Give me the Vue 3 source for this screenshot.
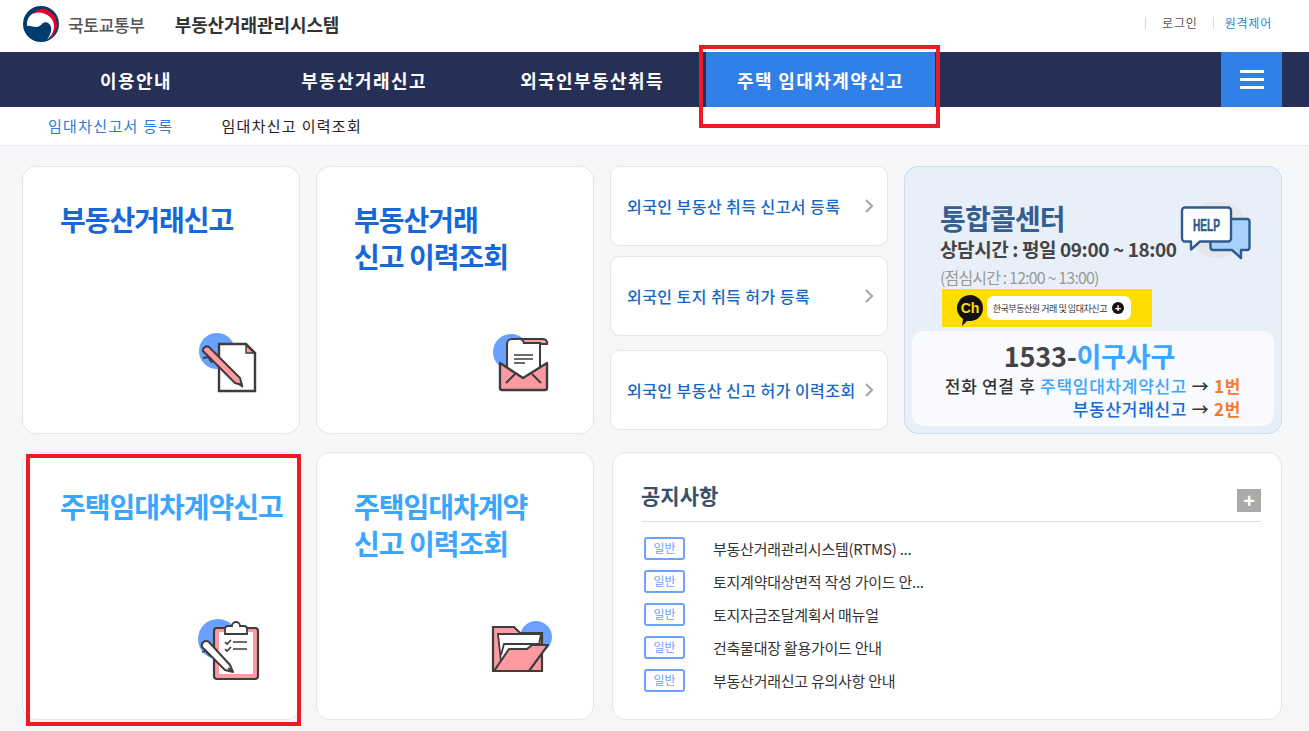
<script setup>
const topLinks = [
  { text: '로그인', cls: 'tl-dark' },
  { text: '원격제어', cls: 'tl-blue' },
]
const navItems = ['이용안내', '부동산거래신고', '외국인부동산취득', '주택 임대차계약신고']
const sideLinks = ['외국인 부동산 취득 신고서 등록', '외국인 토지 취득 허가 등록', '외국인 부동산 신고 허가 이력조회']
const notices = [
  '부동산거래관리시스템(RTMS) ...',
  '토지계약대상면적 작성 가이드 안...',
  '토지자금조달계획서 매뉴얼',
  '건축물대장 활용가이드 안내',
  '부동산거래신고 유의사항 안내',
]
</script>

<template>
  <div class="page">
    <header class="top">
      <div class="brand">
        <svg class="logo" width="40" height="38" viewBox="21 5 40 38">
          <circle cx="41" cy="24" r="18" fill="#003c6c" />
          <path d="M27 26C26 17 33 11 41 11C50 11 56 18 55 26C54 33 50 37 47 40C50 35 52 31 51 27C50 23 46 21 43 23C41 25 39 27 36 27C32 27 30 25 27 26z" fill="#fff" />
          <path d="M31 15C35 10 41 8 45 9C52 11 57 17 57 25C57 31 53 36 49 40C52 35 54 31 54 26C54 19 48 14 42 13C37 12 34 13 31 15z" fill="#e4002b" />
        </svg>
        <span class="ministry">국토교통부</span>
        <span class="system">부동산거래관리시스템</span>
      </div>
      <div class="top-links">
        <a v-for="l in topLinks" :key="l.text" :class="['top-link', l.cls]">{{ l.text }}</a>
      </div>
    </header>

    <nav class="nav">
      <a v-for="(n, i) in navItems" :key="n" :class="['nav-item', { active: i === 3 }]">{{ n }}</a>
      <button class="burger" aria-label="menu"><i></i><i></i><i></i></button>
    </nav>

    <div class="subnav">
      <a class="sub on">임대차신고서 등록</a>
      <a class="sub">임대차신고 이력조회</a>
    </div>

    <main class="board">
      <section class="card">
        <h2 class="title blue">부동산거래신고</h2>
        <svg class="ico" width="70" height="70" viewBox="195 328 70 70">
          <circle cx="218" cy="351" r="18" fill="#6aa0ff" />
          <path d="M220 344h27l9 9v38h-36z" fill="#fff" stroke="#3d3d3d" stroke-width="2.400" />
          <path d="M247 345v8h8z" fill="#ff9aa2" stroke="#3d3d3d" stroke-width="1.400" />
          <path d="M204 351a4 4 0 0 1 6-4l31 31l2 7l-7-2z" fill="#ff9aa2" stroke="#3d3d3d" stroke-width="2" stroke-linejoin="round" />
          <path d="M204 358l5-1l4 6M240 384l4 3" fill="none" stroke="#3d3d3d" stroke-width="1.800" />
        </svg>
      </section>

      <section class="card">
        <h2 class="title blue">부동산거래<br />신고 이력조회</h2>
        <svg class="ico" width="70" height="70" viewBox="489 328 70 70">
          <circle cx="512" cy="352" r="18" fill="#6aa0ff" />
          <path d="M519 339h25a4 4 0 0 1 4 5h-11l-18-1z" fill="#ff9aa2" stroke="#3d3d3d" stroke-width="2" />
          <path d="M508 370v-26a5 5 0 0 1 5-5h6a5 5 0 0 1 6 4h16v27" fill="#fff" stroke="#3d3d3d" stroke-width="2" />
          <path d="M515 355h19M515 359h19M515 363h11" stroke="#3d3d3d" stroke-width="1.600" />
          <path d="M501 363v25a2 2 0 0 0 2 2h43a2 2 0 0 0 2-2v-25l-24 15z" fill="#ff9aa2" stroke="#3d3d3d" stroke-width="2.400" stroke-linejoin="round" />
          <path d="M507 383l9-9M542 383l-9-9" stroke="#3d3d3d" stroke-width="2" />
        </svg>
      </section>

      <div class="side">
        <a v-for="s in sideLinks" :key="s" class="side-link">
          <span>{{ s }}</span>
          <svg class="chev" width="10" height="16" viewBox="0 0 10 16"><path d="M2 2l6 6l-6 6" fill="none" stroke="#a9a9a9" stroke-width="2.200" /></svg>
        </a>
      </div>

      <section class="call">
        <div class="call-head">
          <div>
            <h2 class="call-title">통합콜센터</h2>
            <p class="call-hours">상담시간 : 평일 09:00 ~ 18:00</p>
            <p class="call-break">(점심시간 : 12:00 ~ 13:00)</p>
          </div>
          <svg class="help" width="72" height="60" viewBox="1180 198 72 60">
            <circle cx="1218" cy="225" r="29" fill="#e4e6ea" />
            <path d="M1210 215h37a2.500 2.500 0 0 1 2.500 2.500v26a2.500 2.500 0 0 1-2.500 2.500h-6v8l-9-8h-19a2.500 2.500 0 0 1-2.500-2.500z" fill="#a8d2fb" stroke="#2f5c8e" stroke-width="2.400" stroke-linejoin="round" />
            <path d="M1185 203.500h43a3 3 0 0 1 3 3v28a3 3 0 0 1-3 3h-28l-9 8v-8h-6a3 3 0 0 1-3-3v-28a3 3 0 0 1 3-3z" fill="#fff" stroke="#2f5c8e" stroke-width="2.400" stroke-linejoin="round" />
            <text x="1193" y="227" textLength="27" lengthAdjust="spacingAndGlyphs" class="help-t">HELP</text>
          </svg>
        </div>
        <div class="kakao">
          <svg class="ch" width="28" height="32" viewBox="0 0 28 32">
            <path d="M14 1a13 13 0 0 1 0 26h-3l-5 5l1-7A13 13 0 0 1 14 1z" fill="#111" />
            <text x="14" y="19" text-anchor="middle" class="ch-t">Ch</text>
          </svg>
          <span class="pill">
            <span class="pill-t">한국부동산원 거래 및 임대차신고</span>
            <span class="plus">+</span>
          </span>
        </div>
        <div class="phone">
          <div class="num">1533-<span class="sky">이구사구</span></div>
          <div class="line">전화 연결 후 <span class="sky2">주택임대차계약신고</span> → <b>1번</b></div>
          <div class="line"><span class="blue2">부동산거래신고</span> → <b>2번</b></div>
        </div>
      </section>

      <section class="card low">
        <h2 class="title sky">주택임대차계약신고</h2>
        <svg class="ico" width="70" height="70" viewBox="195 614 70 70">
          <circle cx="219" cy="639" r="20" fill="#6aa0ff" />
          <rect x="215" y="628" width="44" height="51" rx="3" fill="#ff9aa2" stroke="#3d3d3d" stroke-width="2.200" />
          <rect x="220" y="632" width="34" height="42" fill="#fff" />
          <path d="M226 634v-5a3 3 0 0 1 3-3h4a4 4 0 0 1 8 0h4a3 3 0 0 1 3 3v5z" fill="#fff" stroke="#3d3d3d" stroke-width="1.800" />
          <path d="M226 642l2 2l4-4M226 649l2 2l4-4M234 642h14M234 649h14" fill="none" stroke="#3d3d3d" stroke-width="1.700" />
          <path d="M203 647a4.500 4.500 0 0 1 7-5l21 23l3 7l-8-2z" fill="#fff" stroke="#3d3d3d" stroke-width="2" stroke-linejoin="round" />
          <path d="M203 652l4-1l4 5M229 668l4 3" fill="none" stroke="#3d3d3d" stroke-width="1.700" />
        </svg>
      </section>

      <section class="card low">
        <h2 class="title sky">주택임대차계약<br />신고 이력조회</h2>
        <svg class="ico" width="70" height="70" viewBox="489 614 70 70">
          <circle cx="537" cy="637" r="16" fill="#6aa0ff" />
          <path d="M494 627h21l6 6h22v38h-49z" fill="#ff9aa2" stroke="#3d3d3d" stroke-width="2.200" />
          <path d="M499 634h43l-3 16l-37 12z" fill="#fff" stroke="#3d3d3d" stroke-width="1.800" />
          <path d="M502 655l3-11h36l2 3l-4 3" fill="#fff" stroke="#3d3d3d" stroke-width="1.800" />
          <path d="M495 671l15-22h18l5-4h16l-19 26z" fill="#ff9aa2" stroke="#3d3d3d" stroke-width="2.200" stroke-linejoin="round" />
        </svg>
      </section>

      <section class="notice">
        <div class="notice-head">
          <h3 class="notice-title">공지사항</h3>
          <button class="more" aria-label="more">+</button>
        </div>
        <ul class="notice-list">
          <li v-for="n in notices" :key="n" class="notice-row">
            <span class="badge">일반</span>
            <span class="notice-text">{{ n }}</span>
          </li>
        </ul>
      </section>
    </main>

    <div class="mark mark-nav"></div>
    <div class="mark mark-card"></div>
  </div>
</template>

<style>
html, body { margin: 0; background: #f5f6f8; overflow: hidden; }
</style>

<style scoped>
.page {
  position: relative;
  width: 1309px;
  height: 731px;
  overflow: hidden;
  background: #f5f6f8;
  font-family: "Noto Sans CJK KR", "Noto Sans", sans-serif;
  color: #333;
}
a { text-decoration: none; }
h2, h3, p, ul { margin: 0; padding: 0; }
button { border: 0; padding: 0; font-family: inherit; }

.top {
  height: 52px;
  background: #fff;
  display: flex;
  justify-content: space-between;
  padding: 0 37px 0 21px;
}
.brand { display: flex; align-items: center; height: 48px; }
.logo { margin-right: 7px; }
.ministry { font-size: 17px; font-weight: 500; color: #555; letter-spacing: -.3px; margin-right: 30px; }
.system { font-size: 18px; font-weight: 700; color: #333; letter-spacing: -.1px; }
.top-links { display: flex; height: 46px; align-items: center; }
.top-link { font-size: 12px; line-height: 12px; letter-spacing: .8px; border-left: 1px solid #d8d8d8; padding-left: 16px; }
.tl-dark { color: #555; margin-right: 15px; }
.tl-blue { color: #1f88d8; padding-left: 11px; }

.nav {
  height: 55px;
  background: #262f56;
  display: flex;
  padding-left: 22px;
  position: relative;
}
.nav-item {
  width: 228px;
  display: flex;
  align-items: center;
  justify-content: center;
  color: #fff;
  font-size: 18px;
  font-weight: 700;
  letter-spacing: 1.400px;
}
.nav-item.active { width: 229px; background: #3180e8; }
.burger {
  margin-left: auto;
  margin-right: 27px;
  width: 61px;
  background: #3180e8;
  display: flex;
  flex-direction: column;
  justify-content: center;
  align-items: center;
  gap: 5px;
}
.burger i { display: block; width: 24px; height: 3px; background: #fff; }

.subnav {
  height: 39px;
  background: #fff;
  border-bottom: 1px solid #e8ebef;
  box-sizing: border-box;
  display: flex;
  align-items: center;
  padding-left: 48px;
  gap: 48px;
}
.sub { font-size: 15px; color: #222; letter-spacing: 1.300px; margin-top: -2px; }
.sub.on { color: #2e7ad8; }

.board {
  display: grid;
  grid-template-columns: 278px 278px 278px 378px;
  grid-template-rows: 268px 268px;
  column-gap: 16px;
  row-gap: 18px;
  padding: 20px 0 0 22px;
}
.card {
  background: #fff;
  border: 1px solid #e4e6ea;
  border-radius: 14px;
  box-sizing: border-box;
  display: flex;
  flex-direction: column;
  justify-content: space-between;
  padding: 34px 35px 35px 37px;
}
.card.low { padding-top: 35px; }
.title { font-size: 28px; line-height: 37px; font-weight: 700; letter-spacing: -1px; white-space: nowrap; }
.blue { color: #1668d8; }
.sky { color: #3aa6ff; }
.ico { align-self: flex-end; display: block; }

.side { display: flex; flex-direction: column; }
.side-link {
  flex: none;
  height: 80px;
  box-sizing: border-box;
  background: #fff;
  border: 1px solid #e4e6ea;
  border-radius: 10px;
  display: flex;
  align-items: center;
  justify-content: space-between;
  padding: 0 13px 0 16px;
  color: #1668c8;
  font-size: 16px;
  font-weight: 500;
  letter-spacing: .45px;
  white-space: nowrap;
  margin-bottom: 10px;
}
.side-link:nth-child(2) { margin-bottom: 14px; }

.call {
  background: #e9eff8;
  border: 1px solid #cdd9ec;
  border-radius: 14px;
  box-sizing: border-box;
  padding: 31px 7px 7px;
}
.call-head { display: flex; justify-content: space-between; padding: 0 22px 0 28px; height: 91px; }
.call-title { font-size: 28px; line-height: 40px; font-weight: 700; color: #365f91; letter-spacing: -.8px; }
.call-hours { font-size: 19px; line-height: 24px; font-weight: 700; color: #444; letter-spacing: -.4px; white-space: nowrap; margin-top: -1px; }
.call-break { font-size: 16px; line-height: 20px; color: #999; letter-spacing: -.85px; margin-top: 6px; white-space: nowrap; }
.help { display: block; margin-top: 4px; flex: none; }
.help-t { font-family: "Liberation Sans", sans-serif; font-size: 16px; font-weight: 700; fill: #2f5c8e; stroke: #2f5c8e; stroke-width: .5px; }

.kakao {
  width: 210px;
  height: 38px;
  background: #ffdd00;
  margin-left: 30px;
  display: flex;
  align-items: center;
  padding-left: 14px;
  box-sizing: border-box;
}
.ch { flex: none; margin-top: 4px; }
.ch-t { font-family: "Liberation Sans", sans-serif; font-size: 14px; font-weight: 700; fill: #ffdd00; }
.pill {
  margin-left: 3px;
  width: 144px;
  height: 24px;
  background: #fff;
  border-radius: 7px;
  display: flex;
  align-items: center;
  justify-content: flex-end;
  padding-right: 7px;
  box-sizing: border-box;
  gap: 5px;
}
.pill-t { font-size: 9px; color: #333; white-space: nowrap; letter-spacing: -.45px; }
.plus {
  width: 12px;
  height: 12px;
  border-radius: 50%;
  background: #111;
  color: #fff;
  font: 700 11px/12px "Liberation Sans", sans-serif;
  text-align: center;
}

.phone {
  margin-top: 4px;
  height: 95px;
  background: #f8fafd;
  border-radius: 12px;
  padding: 7px 33px 0 0;
  box-sizing: border-box;
  text-align: right;
}
.num { font-size: 27px; line-height: 36px; font-weight: 700; color: #444; text-align: center; padding-left: 26px; letter-spacing: -.2px; }
.line { font-size: 17px; line-height: 23px; font-weight: 500; color: #333; letter-spacing: .7px; white-space: nowrap; }
.line b { color: #f47b30; font-weight: 700; }
.sky2 { color: #3aa6ff; }
.blue2 { color: #1668d8; }

.notice {
  grid-column: 3 / 5;
  background: #fff;
  border: 1px solid #e4e6ea;
  border-radius: 14px;
  margin-left: 2px;
  box-sizing: border-box;
  padding: 23px 20px 0 28px;
}
.notice-head {
  display: flex;
  justify-content: space-between;
  height: 45px;
  border-bottom: 1px solid #ddd;
  margin-left: 1px;
}
.notice-title { font-size: 21px; line-height: 38px; font-weight: 700; color: #3a5070; margin-left: -1px; }
.more {
  width: 24px;
  height: 23px;
  margin-top: 13px;
  background: #aaa;
  color: #fff;
  font: 700 20px/22px "Liberation Sans", sans-serif;
}
.notice-list { list-style: none; padding: 10px 0 0 3px; }
.notice-row { display: flex; align-items: center; height: 33px; }
.badge {
  width: 41px;
  height: 23px;
  box-sizing: border-box;
  border: 2px solid #6ea2ff;
  border-radius: 3px;
  color: #6ea2ff;
  font-size: 12px;
  line-height: 18px;
  text-align: center;
  margin-right: 28px;
}
.notice-text { font-size: 15px; color: #333; letter-spacing: -.25px; }

.mark { position: absolute; border: 4px solid #ed1c24; box-sizing: border-box; pointer-events: none; }
.mark-nav { left: 699px; top: 45px; width: 241px; height: 83px; }
.mark-card { left: 26px; top: 454px; width: 275px; height: 272px; }
</style>
